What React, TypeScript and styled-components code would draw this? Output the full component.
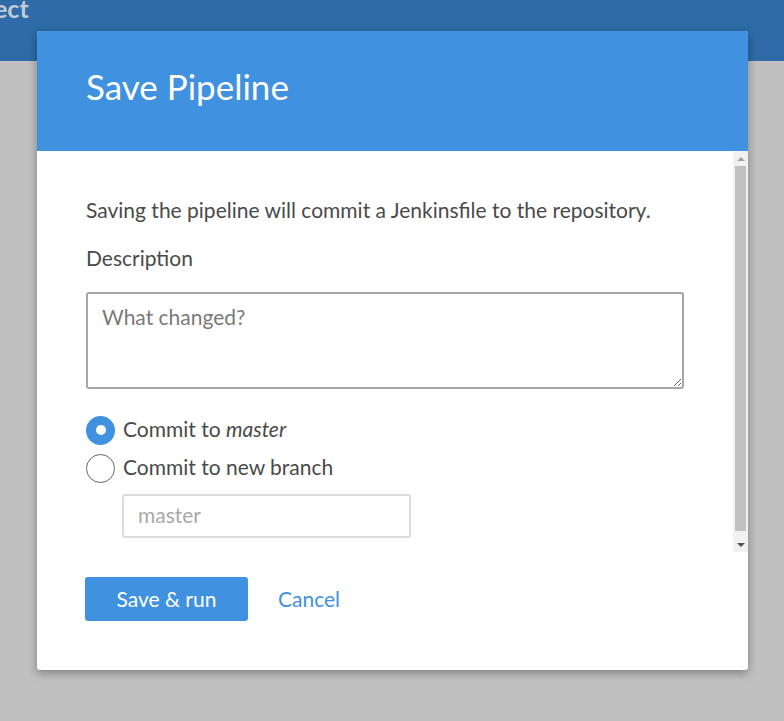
import React from "react";
import styled, { createGlobalStyle } from "styled-components";

const Global = createGlobalStyle`
  html, body { margin: 0; padding: 0; }
  body {
    width: 784px;
    height: 721px;
    overflow: hidden;
    background: #c0c0c0;
    font-family: Lato, "Open Sans", sans-serif;
  }
`;

const Page = styled.div`
  position: relative;
  width: 784px;
  height: 721px;
  background: #c0c0c0;
`;

const TopBar = styled.header`
  height: 61px;
  background: #2e6ba8;
  overflow: hidden;
`;

const TopTitle = styled.div`
  margin-top: -7px;
  margin-left: -6px;
  font-size: 25px;
  font-weight: 700;
  color: #c3ccd6;
  line-height: 30px;
`;

const Dialog = styled.div`
  position: absolute;
  left: 37px;
  top: 31px;
  width: 711px;
  height: 639px;
  background: #fff;
  border-radius: 3px;
  box-shadow: 0 3px 10px rgba(0, 0, 0, 0.35);
  display: flex;
  flex-direction: column;
  overflow: hidden;
`;

const DialogHeader = styled.div`
  height: 120px;
  flex: none;
  background: #4092e0;
  display: flex;
  align-items: center;
  padding-left: 49px;
`;

const Title = styled.h1`
  margin: -9px 0 0;
  font-size: 35px;
  font-weight: 400;
  color: #fff;
  line-height: 1;
`;

const BodyRow = styled.div`
  height: 401px;
  flex: none;
  display: flex;
`;

const ScrollBody = styled.div`
  flex: 1;
  min-width: 0;
  overflow: hidden;
`;

const ScrollTrack = styled.div`
  width: 15px;
  flex: none;
  background: #f1f1f1;
  display: flex;
  flex-direction: column;
  align-items: center;
`;

const ScrollArrow = styled.div<{ $down?: boolean; $dark?: boolean }>`
  height: 15px;
  width: 100%;
  flex: none;
  display: flex;
  align-items: center;
  justify-content: center;
  &::before {
    content: "";
    width: 0;
    height: 0;
    border-left: 4px solid transparent;
    border-right: 4px solid transparent;
    ${(p) =>
      p.$down
        ? `border-top: 4px solid ${p.$dark ? "#505050" : "#a3a3a3"};`
        : `border-bottom: 4px solid ${p.$dark ? "#505050" : "#a3a3a3"};`}
  }
`;

const ScrollThumb = styled.div`
  width: 11px;
  height: 365px;
  background: #c1c1c1;
  flex: none;
`;

const TrackSpacer = styled.div`
  flex: 1;
`;

const Content = styled.div`
  padding: 47px 49px 21px 49px;
  color: #4a4a4a;
  font-size: 21px;
`;

const Para = styled.p`
  margin: 0;
  line-height: 24px;
`;

const Label = styled.div`
  margin-top: 24px;
  line-height: 24px;
`;

const TextArea = styled.textarea`
  display: block;
  box-sizing: border-box;
  margin-top: 22px;
  width: 100%;
  height: 97px;
  border: 2px solid #a6a6a6;
  border-radius: 3px;
  padding: 10px 14px;
  font-family: Lato, sans-serif;
  font-size: 21px;
  color: #4a4a4a;
  resize: vertical;
  outline: none;
  &::placeholder { color: #7a7a7a; }
`;

const RadioList = styled.div`
  margin-top: 26px;
  display: flex;
  flex-direction: column;
  gap: 8px;
`;

const RadioRow = styled.label`
  display: flex;
  align-items: center;
  height: 30px;
  gap: 8px;
  cursor: pointer;
`;

const RadioDot = styled.span<{ $checked?: boolean }>`
  box-sizing: border-box;
  width: 29px;
  height: 29px;
  border-radius: 50%;
  flex: none;
  display: flex;
  align-items: center;
  justify-content: center;
  background: ${(p) => (p.$checked ? "#4092e0" : "#fff")};
  border: ${(p) => (p.$checked ? "none" : "1.5px solid #666")};
  &::after {
    content: "";
    display: ${(p) => (p.$checked ? "block" : "none")};
    width: 10px;
    height: 10px;
    border-radius: 50%;
    background: #fff;
  }
`;

const RadioText = styled.span`
  font-size: 21px;
  color: #4a4a4a;
  line-height: 24px;
  margin-top: -2px;
`;

const BranchInput = styled.input`
  display: block;
  box-sizing: border-box;
  margin: 11px 0 0 36px;
  width: 289px;
  height: 44px;
  border: 2px solid #dcdcdc;
  border-radius: 3px;
  padding: 0 14px 3px;
  font-family: Lato, sans-serif;
  font-size: 21px;
  outline: none;
  &::placeholder { color: #a9a9a9; }
`;

const Footer = styled.div`
  flex: 1;
  display: flex;
  align-items: flex-start;
  gap: 30px;
  padding: 25px 48px 0;
`;

const PrimaryButton = styled.button`
  width: 163px;
  height: 44px;
  border: none;
  border-radius: 3px;
  background: #4092e0;
  color: #fff;
  font-family: Lato, sans-serif;
  font-size: 21px;
  padding: 0 0 2px;
  cursor: pointer;
`;

const LinkButton = styled.button`
  height: 44px;
  padding: 0 0 2px;
  border: none;
  background: none;
  color: #4092e0;
  font-family: Lato, sans-serif;
  font-size: 21px;
  cursor: pointer;
`;

export default function App() {
  return (
    <>
      <Global />
      <Page>
        <TopBar>
          <TopTitle>ect</TopTitle>
        </TopBar>
        <Dialog>
          <DialogHeader>
            <Title>Save Pipeline</Title>
          </DialogHeader>
          <BodyRow>
            <ScrollBody>
              <Content>
                <Para>Saving the pipeline will commit a Jenkinsfile to the repository.</Para>
                <Label>Description</Label>
                <TextArea placeholder="What changed?" />
                <RadioList>
                  <RadioRow>
                    <RadioDot $checked />
                    <RadioText>
                      Commit to <i>master</i>
                    </RadioText>
                  </RadioRow>
                  <RadioRow>
                    <RadioDot />
                    <RadioText>Commit to new branch</RadioText>
                  </RadioRow>
                </RadioList>
                <BranchInput placeholder="master" />
              </Content>
            </ScrollBody>
            <ScrollTrack>
              <ScrollArrow />
              <ScrollThumb />
              <TrackSpacer />
              <ScrollArrow $down $dark />
            </ScrollTrack>
          </BodyRow>
          <Footer>
            <PrimaryButton>Save &amp; run</PrimaryButton>
            <LinkButton>Cancel</LinkButton>
          </Footer>
        </Dialog>
      </Page>
    </>
  );
}
